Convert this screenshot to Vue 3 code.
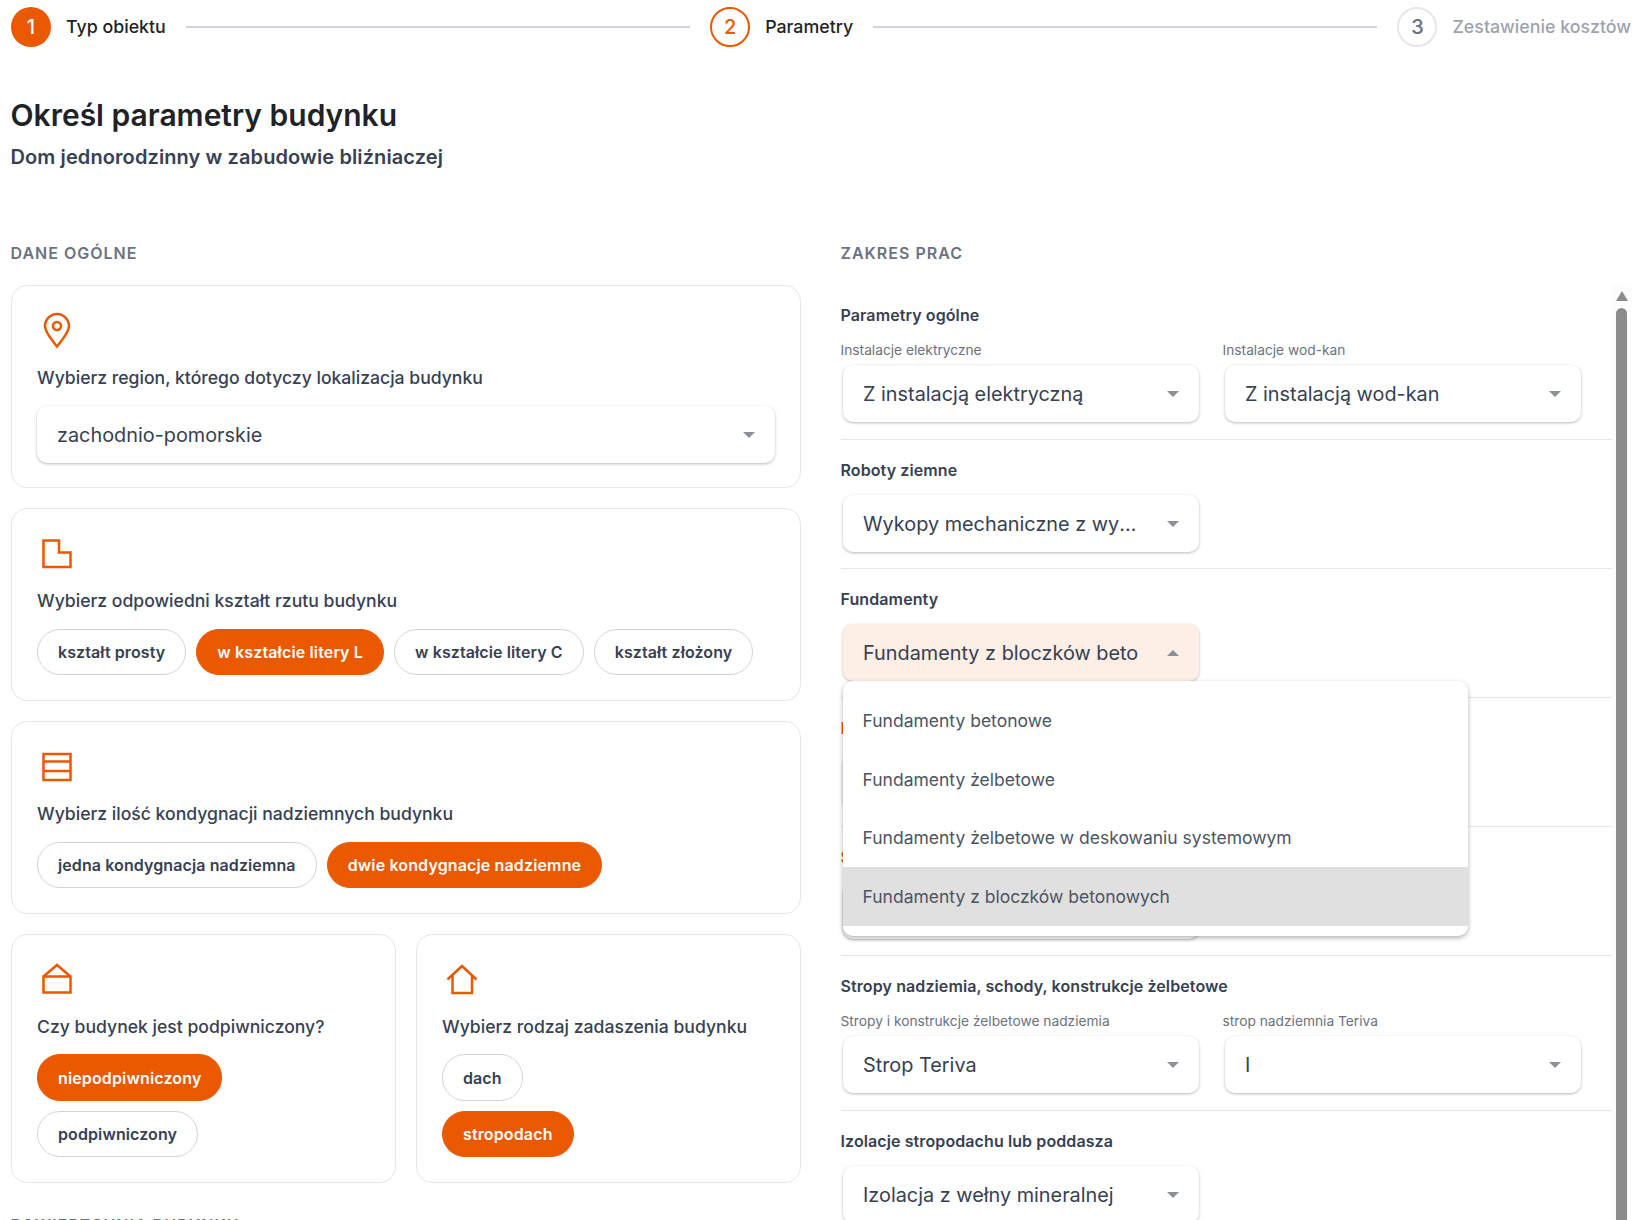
<template>
  <div class="page">
    <div class="stepper">
      <template v-for="(step, i) in steps" :key="step.label">
        <div class="step" :class="step.state">
          <span class="step-num">{{ i + 1 }}</span>
          <span class="step-label">{{ step.label }}</span>
        </div>
        <div v-if="i < steps.length - 1" class="step-line"></div>
      </template>
    </div>

    <h1 class="title">Określ parametry budynku</h1>
    <h2 class="subtitle">Dom jednorodzinny w zabudowie bliźniaczej</h2>

    <div class="columns">
      <div class="col-left">
        <div class="group-label">DANE OGÓLNE</div>

        <div class="card card-region">
          <svg class="card-icon" viewBox="0 0 40 40">
            <path d="M20 35.500C15 29 8 21.500 8 15a12 12 0 0 1 24 0c0 6.500-7 14-12 20.500Z" />
            <circle cx="20" cy="15" r="4" />
          </svg>
          <div class="card-label">Wybierz region, którego dotyczy lokalizacja budynku</div>
          <div class="select">
            <span class="select-value">zachodnio-pomorskie</span>
            <span class="caret"></span>
          </div>
        </div>

        <div class="card">
          <svg class="card-icon" viewBox="0 0 40 40">
            <path d="M6.500 6.500H22V18.500H33.500V33H6.500Z" />
          </svg>
          <div class="card-label">Wybierz odpowiedni kształt rzutu budynku</div>
          <div class="pills">
            <button v-for="p in shapes" :key="p.text" class="pill" :class="{ active: p.active }">{{ p.text }}</button>
          </div>
        </div>

        <div class="card">
          <svg class="card-icon" viewBox="0 0 40 40">
            <path d="M6.500 7H33.500V33H6.500Z M6.500 14.500H33.500 M6.500 24H33.500" />
          </svg>
          <div class="card-label">Wybierz ilość kondygnacji nadziemnych budynku</div>
          <div class="pills">
            <button v-for="p in floors" :key="p.text" class="pill" :class="{ active: p.active }">{{ p.text }}</button>
          </div>
        </div>

        <div class="card-pair">
          <div class="card">
            <svg class="card-icon" viewBox="0 0 40 40">
              <path d="M6.500 16.500L20 5L33.500 16.500 M6.500 16.500H33.500V32.500H6.500Z" />
            </svg>
            <div class="card-label">Czy budynek jest podpiwniczony?</div>
            <div class="pills stacked">
              <button v-for="p in basement" :key="p.text" class="pill" :class="{ active: p.active }">{{ p.text }}</button>
            </div>
          </div>
          <div class="card">
            <svg class="card-icon" viewBox="0 0 40 40">
              <path d="M5.500 19.500L20 6L34.500 19.500 M10.500 15.500V33H30V15.500" />
            </svg>
            <div class="card-label">Wybierz rodzaj zadaszenia budynku</div>
            <div class="pills stacked">
              <button v-for="p in roof" :key="p.text" class="pill" :class="{ active: p.active }">{{ p.text }}</button>
            </div>
          </div>
        </div>

        <div class="group-label next-group">POWIERZCHNIA BUDYNKU</div>
      </div>

      <div class="col-right">
        <div class="group-label">ZAKRES PRAC</div>
        <div class="scroll-area">
          <div class="sections">
            <section v-for="sec in sections" :key="sec.title" class="section" :class="{ labelled: sec.fields[0].label }">
              <div class="section-title" :class="{ invalid: sec.invalid }">{{ sec.title }}</div>
              <div class="fields">
                <div v-for="f in sec.fields" :key="f.value" class="field">
                  <label v-if="f.label" class="field-label">{{ f.label }}</label>
                  <div class="select select-small" :class="{ open: f.options }">
                    <span class="select-value">{{ f.value }}</span>
                    <span class="caret"></span>
                    <ul v-if="f.options" class="menu">
                      <li v-for="o in f.options" :key="o" :class="{ current: o === f.selected }">{{ o }}</li>
                    </ul>
                  </div>
                </div>
              </div>
            </section>
          </div>
          <div class="scrollbar">
            <span class="scroll-arrow"></span>
            <span class="scroll-thumb"></span>
          </div>
        </div>
      </div>
    </div>
  </div>
</template>

<script setup>
const steps = [
  { label: 'Typ obiektu', state: 'done' },
  { label: 'Parametry', state: 'current' },
  { label: 'Zestawienie kosztów', state: 'todo' }
]

const shapes = [
  { text: 'kształt prosty' },
  { text: 'w kształcie litery L', active: true },
  { text: 'w kształcie litery C' },
  { text: 'kształt złożony' }
]

const floors = [
  { text: 'jedna kondygnacja nadziemna' },
  { text: 'dwie kondygnacje nadziemne', active: true }
]

const basement = [
  { text: 'niepodpiwniczony', active: true },
  { text: 'podpiwniczony' }
]

const roof = [
  { text: 'dach' },
  { text: 'stropodach', active: true }
]

const sections = [
  {
    title: 'Parametry ogólne',
    fields: [
      { label: 'Instalacje elektryczne', value: 'Z instalacją elektryczną' },
      { label: 'Instalacje wod-kan', value: 'Z instalacją wod-kan' }
    ]
  },
  {
    title: 'Roboty ziemne',
    fields: [{ value: 'Wykopy mechaniczne z wywozem urobku' }]
  },
  {
    title: 'Fundamenty',
    fields: [
      {
        value: 'Fundamenty z bloczków betonowych',
        selected: 'Fundamenty z bloczków betonowych',
        options: [
          'Fundamenty betonowe',
          'Fundamenty żelbetowe',
          'Fundamenty żelbetowe w deskowaniu systemowym',
          'Fundamenty z bloczków betonowych'
        ]
      }
    ]
  },
  {
    title: 'Izolacje fundamentów',
    invalid: true,
    fields: [{ value: 'Izolacja przeciwwilgociowa' }]
  },
  {
    title: 'Ściany nadziemia',
    invalid: true,
    fields: [{ value: 'Ściany murowane' }]
  },
  {
    title: 'Stropy nadziemia, schody, konstrukcje żelbetowe',
    fields: [
      { label: 'Stropy i konstrukcje żelbetowe nadziemia', value: 'Strop Teriva' },
      { label: 'strop nadziemnia Teriva', value: 'I' }
    ]
  },
  {
    title: 'Izolacje stropodachu lub poddasza',
    fields: [{ value: 'Izolacja z wełny mineralnej' }]
  }
]
</script>

<style>
html,
body {
  margin: 0;
  background: #fff;
  overflow: hidden;
}
</style>

<style scoped>
.page {
  box-sizing: border-box;
  height: 1220px;
  overflow: hidden;
  padding: 7px 18px 0 11px;
  font-family: Inter, "Liberation Sans", sans-serif;
  color: #1f2937;
}

.stepper {
  display: flex;
  align-items: center;
  gap: 20px;
  height: 40px;
}

.step {
  display: flex;
  align-items: center;
  gap: 15px;
  white-space: nowrap;
}

.step-num {
  box-sizing: border-box;
  display: flex;
  align-items: center;
  justify-content: center;
  width: 40px;
  height: 40px;
  border-radius: 50%;
  font-size: 20px;
  font-weight: 500;
}

.step-label {
  margin-top: -1px;
  font-size: 17.8px;
  font-weight: 500;
  color: #1f2328;
}

.done .step-num {
  background: #ea5800;
  color: #fff;
}

.current .step-num {
  border: 2px solid #ea5800;
  color: #ea5800;
}

.todo .step-num {
  border: 2px solid #e5e7eb;
  color: #6b7280;
}

.todo .step-label {
  color: #9ca3af;
}

.step-line {
  flex: 1;
  height: 2px;
  background: #d1d5db;
}

.title {
  margin: 50px 0 0 -0.5px;
  font-size: 30px;
  line-height: 36px;
  font-weight: 600;
  color: #1f2328;
}

.subtitle {
  margin: 10px 0 0 -0.5px;
  font-size: 20px;
  line-height: 28px;
  font-weight: 600;
  letter-spacing: 0.1px;
  color: #374151;
}

.columns {
  display: grid;
  grid-template-columns: 790px 1fr;
  gap: 40px;
  margin-top: 72px;
}

.group-label {
  margin: 0 0 22px -0.5px;
  font-size: 16px;
  line-height: 20px;
  font-weight: 600;
  letter-spacing: 1px;
  color: #6b7280;
}

.next-group {
  margin-top: 32px;
}

.card {
  box-sizing: border-box;
  margin-bottom: 20px;
  padding: 25px;
  background: #fff;
  border: 1px solid #e5e7eb;
  border-radius: 16px;
}

.card-region {
  padding-bottom: 24px;
}

.card-pair {
  display: grid;
  grid-template-columns: 1fr 1fr;
  gap: 20px;
}

.card-pair .card {
  margin-bottom: 0;
}

.card-pair .card-label {
  margin-bottom: 15px;
}

.card-icon {
  display: block;
  width: 40px;
  height: 40px;
  fill: none;
  stroke: #ea5800;
  stroke-width: 2.500;
}

.card-label {
  margin: 15px 0 16px;
  font-size: 17.6px;
  line-height: 24px;
  font-weight: 500;
  color: #374151;
}

.pills {
  display: flex;
  flex-wrap: wrap;
  gap: 10px;
}

.pills.stacked {
  flex-direction: column;
  align-items: flex-start;
}

.pill {
  box-sizing: border-box;
  height: 46px;
  padding: 0 20px;
  border: 1px solid #d1d5db;
  border-radius: 23px;
  background: #fff;
  font-family: inherit;
  font-size: 16px;
  font-weight: 600;
  letter-spacing: 0.1px;
  color: #374151;
}

.pills.stacked .pill:first-child {
  height: 47px;
}

.pill.active {
  background: #ea5800;
  border-color: #ea5800;
  color: #fff;
  letter-spacing: 0.14px;
}

.select {
  position: relative;
  box-sizing: border-box;
  display: flex;
  align-items: center;
  height: 57px;
  padding: 0 20px 0 20px;
  background: #fff;
  border-radius: 10px;
  box-shadow: 0 1px 3px rgba(0, 0, 0, 0.28);
}

.select-value {
  flex: 1;
  min-width: 0;
  overflow: hidden;
  white-space: nowrap;
  text-overflow: ellipsis;
  font-size: 19.85px;
  color: #374151;
}

.caret {
  flex: none;
  margin-left: 29px;
  width: 0;
  height: 0;
  border-left: 6px solid transparent;
  border-right: 6px solid transparent;
  border-top: 6px solid #8b9099;
}

.select.open {
  background: #fdeee6;
}

.select.open .select-value {
  text-overflow: clip;
}

.select.open .caret {
  border-top: 0;
  border-bottom: 6px solid #8b9099;
}

.menu {
  position: absolute;
  z-index: 5;
  top: 100%;
  left: 0;
  width: 625px;
  margin: 0;
  padding: 10px 0;
  list-style: none;
  background: #fff;
  border-radius: 10px;
  box-shadow: 0 2px 5px rgba(0, 0, 0, 0.3);
}

.menu li {
  display: flex;
  align-items: center;
  height: 58.8px;
  padding-left: 19.5px;
  font-size: 17.5px;
  color: #4b5563;
}

.menu li.current {
  background: #e0e0e0;
}

.scroll-area {
  display: flex;
}

.sections {
  flex: 1;
  min-width: 0;
}

.section {
  padding: 20px 0 16px;
  border-bottom: 1px solid #e5e7eb;
}

.section:first-child {
  padding-top: 20px;
}

.section.labelled {
  padding-bottom: 17px;
}

.section-title {
  margin: 0 0 15px -0.5px;
  font-size: 16px;
  line-height: 20px;
  font-weight: 600;
  letter-spacing: 0.1px;
  color: #374151;
}

.section-title.invalid {
  color: #ea5800;
}

.fields {
  display: flex;
  gap: 23px;
}

.field {
  width: 359px;
}

.field-label {
  display: block;
  margin: 2px 0 7px -0.5px;
  font-size: 13.75px;
  line-height: 16px;
  color: #6b7280;
}

.select-small {
  margin: 0 1px 0 2px;
}

.scrollbar {
  flex: none;
  display: flex;
  flex-direction: column;
  align-items: center;
  width: 19px;
  background: #fcfcfc;
  padding-top: 6px;
}

.scroll-arrow {
  width: 0;
  height: 0;
  border-left: 6px solid transparent;
  border-right: 6px solid transparent;
  border-bottom: 10px solid #8c8c8c;
}

.scroll-thumb {
  flex: 1;
  width: 11px;
  margin-top: 7px;
  border-radius: 6px 6px 0 0;
  background: #8c8c8c;
}
</style>
